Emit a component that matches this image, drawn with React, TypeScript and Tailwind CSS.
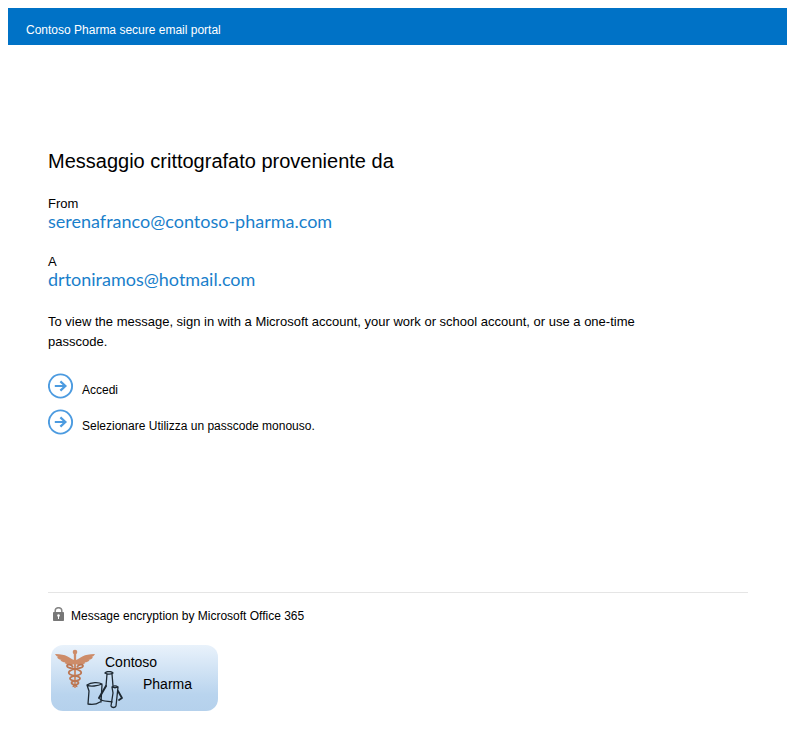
import React from "react";

function ArrowIcon() {
  return (
    <svg width="26" height="26" viewBox="0 0 26 26" fill="none" stroke="#4c9be0" aria-hidden="true" className="shrink-0">
      <circle cx="12.500" cy="13" r="11.600" strokeWidth="1.900" />
      <path d="M6.800 13H17.600M12.400 8.400L17.400 13l-5 4.600" strokeWidth="2.200" />
    </svg>
  );
}

function LockIcon() {
  return (
    <svg width="11" height="14" viewBox="0 0 11 14" aria-hidden="true" className="mb-1 shrink-0">
      <path d="M2.200 6V3.800a3.300 3.100 0 0 1 6.600 0V6" fill="none" stroke="#858585" strokeWidth="1.500" />
      <rect x="0" y="5" width="11" height="9" rx="0.800" fill="#777" />
      <circle cx="5.500" cy="8.600" r="1.300" fill="#fff" />
      <path d="M5 8.500h1v3.500H5z" fill="#fff" />
    </svg>
  );
}

function Caduceus() {
  return (
    <svg width="40" height="40" viewBox="0 0 40 40" aria-hidden="true">
      <g fill="#cd8c69">
        <path d="M19 11C14 9 12 5 0 5c1 2 2.500 2.800 3.500 3-.8.2-1 .2-1.500.2 1.200 2 3 2.500 4.500 2.600l-1 .5c1.500 1.900 3.500 2.200 5 2l-1 .8c3 2 7.500 2.800 9.500 1z" />
        <path d="M21 11C26 9 28 5 40 5c-1 2-2.500 2.800-3.500 3 .8.2 1 .2 1.500.2-1.200 2-3 2.500-4.500 2.600l1 .5c-1.500 1.900-3.500 2.200-5 2l1 .8c-3 2-7.500 2.800-9.500 1z" />
        <circle cx="20" cy="3" r="2.300" />
        <path d="M18.800 4h2.400l-.4 35h-1.600z" />
      </g>
      <g fill="none" stroke="#bc7652" strokeWidth="1.800">
        <path d="M18 18c-2-3-6-3-6-1s4 2 8 3 7 2 6 4.500-11 2-11 5 9 2 8.500 4.500-6 1.500-5 4" />
        <path d="M22 18c2-3 6-3 6-1s-4 2-8 3-7 2-6 4.500 11 2 11 5-9 2-8.500 4.500 6 1.500 5 4" />
      </g>
    </svg>
  );
}

function Glassware() {
  return (
    <svg width="38" height="38" viewBox="0 0 38 38" fill="none" stroke="#1e2932" strokeWidth="1.300" strokeLinecap="round" strokeLinejoin="round" aria-hidden="true">
      <path d="M1 14c4-3 12-3 15-1-4 2-12 3-15 1l2 6-1 13M16 14l-1 17M2 33c5 1 9 0 12-2" />
      <path d="M19 2c2-2 6-2 8 0-2 1.500-6 1.500-8 0l2 1-1 12" />
      <path d="M20 15l-7 12" strokeWidth="2" />
      <path d="M14 28c1 2 5 2 12 3M26 3l1 12" />
      <path d="M26 16c2-1.500 4-1.500 6 0-2 1-4 1-6 0l1 6-2 13c1 2 4 2 5 0l2-19" />
      <path d="M32 20l4 7-3 2" strokeWidth="1.800" />
    </svg>
  );
}

function Party({ label, address }: { label: string; address: string }) {
  return (
    <div>
      <p className="text-[13px] leading-4">{label}</p>
      <a href={"mailto:" + address} className="block font-['Lato',sans-serif] text-[18px] leading-[18px] text-[#1a7fcb]">
        {address}
      </a>
    </div>
  );
}

function Option({ children }: { children: React.ReactNode }) {
  return (
    <a href="#" className="flex items-center gap-2 text-[12px] leading-4">
      <ArrowIcon />
      <span className="pt-2">{children}</span>
    </a>
  );
}

export default function App() {
  return (
    <div className="bg-white p-2 font-['Liberation_Sans',Arial,sans-serif] text-black">
      <header className="bg-[#0072c6] px-[18px] pt-3.5 pb-[7px] text-[12px] leading-4 text-white">
        Contoso Pharma secure email portal
      </header>

      <main className="px-10 pt-[102px]">
        <h1 className="text-[20px] leading-7">Messaggio crittografato proveniente da</h1>
        <div className="mt-[21px] flex flex-col gap-6">
          <Party label="From" address="serenafranco@contoso-pharma.com" />
          <Party label="A" address="drtoniramos@hotmail.com" />
        </div>
        <p className="mt-6 max-w-[600px] text-[13px] leading-5">
          To view the message, sign in with a Microsoft account, your work or school account, or use a one-time passcode.
        </p>
        <nav className="mt-[21px] flex flex-col items-start gap-2.5">
          <Option>Accedi</Option>
          <Option>Selezionare Utilizza un passcode monouso.</Option>
        </nav>
      </main>

      <footer className="mt-[157px] mr-[39px] ml-10 border-t border-[#e5e5e5] pt-3.5">
        <div className="flex items-center gap-[7px] pl-[5px] text-[12px] leading-4">
          <LockIcon />
          <span>Message encryption by Microsoft Office 365</span>
        </div>
        <div className="mt-5 ml-[3px] flex h-[66px] w-[167px] rounded-xl bg-linear-to-b from-[#e9f2fb] via-[#b9d4ee] via-75% to-[#b5d1ec] text-[14px] leading-[22px]">
          <div className="relative w-[54px] pt-1 pl-1">
            <Caduceus />
            <div className="absolute top-[26px] left-[35px]">
              <Glassware />
            </div>
          </div>
          <div className="pt-1.5">
            <p>Contoso</p>
            <p className="pl-[38px]">Pharma</p>
          </div>
        </div>
      </footer>
    </div>
  );
}
